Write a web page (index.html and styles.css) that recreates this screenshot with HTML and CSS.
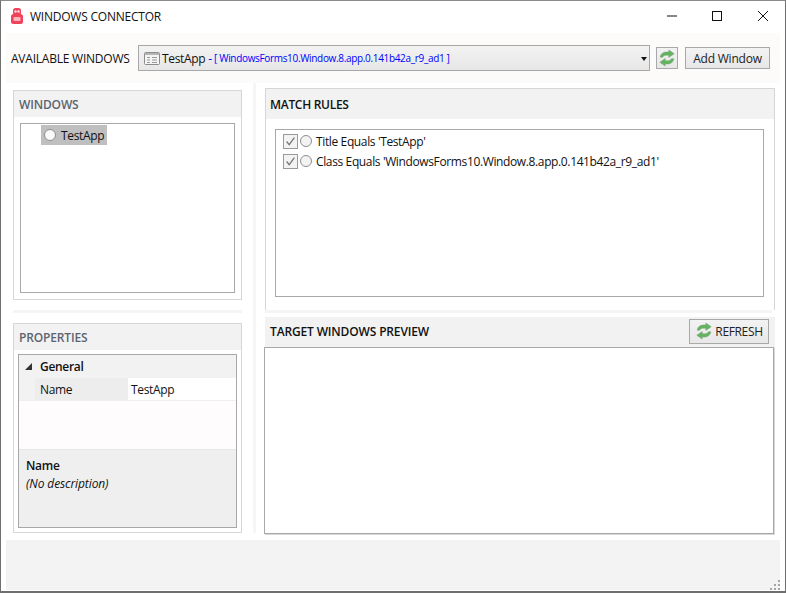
FILE: index.html
```html
<!DOCTYPE html>
<html lang="en">
<head>
<meta charset="utf-8">
<title>Windows Connector</title>
<link rel="stylesheet" href="styles.css">
</head>
<body>
<svg class="defs" width="0" height="0" aria-hidden="true">
  <symbol id="sync" viewBox="0 0 18 18">
    <path d="M2.2 8.2C2.6 4.6 5.6 3 8.4 3h2.4V1l5.4 3.7-5.4 3.7V6.2H8.6c-2 0-3.2.6-3.9 2z" fill="#62b55f" stroke="#7d9c78" stroke-width=".5"/>
    <path d="M15.8 9.8c-.4 3.6-3.4 5.2-6.2 5.2H7.2v2l-5.4-3.7 5.4-3.7v2.2h2.2c2 0 3.2-.6 3.9-2z" fill="#62b55f" stroke="#7d9c78" stroke-width=".5"/>
  </symbol>
  <symbol id="check" viewBox="0 0 15 15">
    <path d="M3 7.5l3 3.6 6-8" fill="none" stroke="#777" stroke-width="1.5"/>
  </symbol>
</svg>
<div class="window">
  <header class="titlebar">
    <svg class="logo" viewBox="0 0 12 16" width="12" height="16" aria-hidden="true">
      <rect x="2" y="0" width="8" height="7" rx="2.500" fill="#f0435a"/>
      <rect x="0" y="6" width="12" height="10" rx="2.500" fill="#f0435a"/>
      <circle cx="4.500" cy="3.500" r="1.200" fill="#ffe0e4"/>
      <circle cx="7.500" cy="3.500" r="1.200" fill="#ffe0e4"/>
      <rect x="2.500" y="9" width="7" height="4" rx="1" fill="#ffb6c0"/>
    </svg>
    <span class="title">WINDOWS CONNECTOR</span>
    <div class="caption">
      <svg viewBox="0 0 12 12" width="12" height="12" class="cap-min" aria-hidden="true"><path d="M1 6h10" stroke="#111" fill="none"/></svg>
      <svg viewBox="0 0 12 12" width="12" height="12" class="cap-max" aria-hidden="true"><rect x="1.500" y="1.500" width="9" height="9" stroke="#111" fill="none"/></svg>
      <svg viewBox="0 0 12 12" width="12" height="12" class="cap-close" aria-hidden="true"><path d="M1 1l10 10M11 1L1 11" stroke="#111" fill="none"/></svg>
    </div>
  </header>

  <section class="toolbar">
    <span class="tool-label">AVAILABLE WINDOWS</span>
    <div class="combo">
      <svg class="win-icon" viewBox="0 0 16 13" width="16" height="13" aria-hidden="true">
        <rect x=".5" y=".5" width="15" height="12" rx="1" fill="#f4f4f4" stroke="#8c8c8c"/>
        <rect x="1" y="1" width="14" height="2" fill="#b5b5b5"/>
        <path d="M3 5.500h3M3 8h3M3 10.500h3M8 5.500h5M8 8h5M8 10.500h5" stroke="#9a9a9a"/>
      </svg>
      <span class="combo-name">TestApp</span>
      <span class="combo-dash">-</span>
      <span class="combo-class">[ WindowsForms10.Window.8.app.0.141b42a_r9_ad1 ]</span>
      <span class="combo-arrow"></span>
    </div>
    <button class="btn btn-icon" type="button" aria-label="Refresh"><svg width="18" height="18" aria-hidden="true"><use href="#sync"/></svg></button>
    <button class="btn btn-add" type="button">Add Window</button>
  </section>

  <main class="main">
    <div class="left">
      <section class="panel">
        <h2 class="panel-head">WINDOWS</h2>
        <div class="tree">
          <div class="tree-item"><span class="radio"></span><span>TestApp</span></div>
        </div>
      </section>
      <div class="rule"></div>
      <section class="panel">
        <h2 class="panel-head">PROPERTIES</h2>
        <div class="props">
          <div class="props-group"><span class="tri"></span><span>General</span></div>
          <div class="props-row">
            <span class="props-name">Name</span>
            <span class="props-value">TestApp</span>
          </div>
          <div class="props-empty"></div>
          <div class="props-desc">
            <strong>Name</strong>
            <em>(No description)</em>
          </div>
        </div>
      </section>
    </div>

    <div class="splitter"></div>

    <div class="right">
      <section class="rules">
        <h2 class="rules-head">MATCH RULES</h2>
        <div class="rules-list">
          <div class="rule-item"><span class="checkbox"><svg width="15" height="15" aria-hidden="true"><use href="#check"/></svg></span><span class="radio"></span><span>Title Equals 'TestApp'</span></div>
          <div class="rule-item"><span class="checkbox"><svg width="15" height="15" aria-hidden="true"><use href="#check"/></svg></span><span class="radio"></span><span>Class Equals 'WindowsForms10.Window.8.app.0.141b42a_r9_ad1'</span></div>
        </div>
      </section>
      <div class="rule rule-right"></div>
      <div class="preview-head">
        <h2 class="rules-head-text">TARGET WINDOWS PREVIEW</h2>
        <button class="btn btn-refresh" type="button"><svg width="18" height="18" aria-hidden="true"><use href="#sync"/></svg><span>REFRESH</span></button>
      </div>
      <div class="preview"></div>
    </div>
  </main>

  <footer class="status">
    <svg class="grip" viewBox="0 0 11 11" width="11" height="11" aria-hidden="true">
      <path d="M8 0h2v2H8zM4 4h2v2H4zM8 4h2v2H8zM0 8h2v2H0zM4 8h2v2H4zM8 8h2v2H8z" fill="#a6a6a6"/>
    </svg>
  </footer>
</div>
</body>
</html>
```

FILE: styles.css
```css
* { box-sizing: border-box; }
html, body { margin: 0; padding: 0; background: #fff; }
body { font-family: "Open Sans", "Noto Sans", sans-serif; font-size: 12px; color: #111; }
.defs { display: block; height: 0; }
h2 { margin: 0; font-size: 12px; font-weight: 600; }
.window { width: 786px; height: 593px; border: 1px solid #6f6f6f; border-bottom-width: 2px; border-top-color: #8a8a8a; display: flex; flex-direction: column; background: #fff; overflow: hidden; }

.titlebar { height: 32px; flex: none; display: flex; align-items: center; padding: 0 0 2px 10px; }
.logo { flex: none; }
.title { margin-left: 7px; letter-spacing: -.23px; }
.caption { margin-left: auto; display: flex; align-items: center; padding-right: 16px; }
.cap-max { margin-left: 33px; }
.cap-close { margin-left: 34px; }

.toolbar { height: 50px; flex: none; margin: 0 5px; padding-left: 5px; background: #fdfafa; display: flex; align-items: center; }
.tool-label { width: 127px; flex: none; letter-spacing: -.23px; white-space: nowrap; }
.combo { width: 512px; height: 26px; flex: none; border: 1px solid #a8a8a8; background: linear-gradient(#f3f3f3, #e7e7e7); display: flex; align-items: center; padding-left: 5px; position: relative; }
.combo-name { margin-left: 2px; letter-spacing: -.35px; }
.combo-dash { margin-left: 3px; color: #0000ff; }
.combo-class { margin-left: 2px; color: #0000ff; font-size: 10px; letter-spacing: -.33px; white-space: nowrap; }
.combo-arrow { position: absolute; right: 2px; top: 11px; border-style: solid; border-width: 4px 3.5px 0; border-color: #111 transparent transparent; }
.btn { font: inherit; color: #222; padding: 0; border: 1px solid #a8a8a8; background: linear-gradient(#f3f3f3, #e7e7e7); display: flex; align-items: center; justify-content: center; height: 22px; flex: none; }
.btn-icon { width: 22px; margin-left: 6px; }
.btn-add { width: 85px; margin-left: 7px; letter-spacing: -.2px; }

.main { height: 457px; flex: none; display: flex; }
.left { width: 229px; flex: none; margin-left: 12px; padding-top: 7px; }
.panel { height: 210px; width: 229px; border: 1px solid #d6d6d6; display: flex; flex-direction: column; background: #fff; }
.panel-head { height: 26px; flex: none; background: #f2f2f2; color: #5d6470; padding-left: 5px; line-height: 28px; letter-spacing: -.15px; }
.rule { height: 3px; background: #f5f5f5; margin: 10px 0; width: 229px; }
.tree { margin: 6px 6px 6px; flex: 1; border: 1px solid #a8a8a8; padding: 1px 0 0 20px; }
.tree-item { width: 66px; height: 20px; background: #bfbfbf; display: flex; align-items: center; padding-left: 3px; gap: 5px; letter-spacing: -.35px; }
.radio { width: 12px; height: 12px; border-radius: 50%; border: 1px solid #8e8e8e; background: #fafafa; flex: none; }

.props { margin: 4px 4px 4px; flex: 1; border: 1px solid #a8a8a8; display: flex; flex-direction: column; background: #fffcfd; }
.props-group { height: 23px; flex: none; background: #f2f2f2; display: flex; align-items: center; font-weight: 600; padding-left: 6px; letter-spacing: -.3px; }
.tri { width: 0; height: 0; border-style: solid; border-width: 0 0 7px 7px; border-color: transparent transparent #333; margin-right: 8px; }
.props-row { height: 23px; flex: none; display: flex; background: #fff; border-bottom: 1px solid #f0f0f0; letter-spacing: -.35px; }
.props-name { width: 109px; flex: none; background: #ededed; border-left: 16px solid #f2f2f2; padding-left: 5px; line-height: 23px; height: 22px; }
.props-value { padding-left: 3px; line-height: 23px; height: 22px; }
.props-empty { flex: 1; }
.props-desc { height: 78px; flex: none; background: #efefef; border-top: 1px solid #e6e6e6; padding: 7px 7px; display: flex; flex-direction: column; gap: 1px; letter-spacing: -.1px; }
.props-desc strong { font-weight: 600; letter-spacing: -.3px; }

.splitter { width: 3px; flex: none; margin: 0 0 7px 11px; background: #f6f6f6; }
.right { width: 511px; flex: none; margin-left: 8px; padding-top: 5px; display: flex; flex-direction: column; }
.rules { height: 222px; margin-left: 1px; border: 1px solid #d6d6d6; border-bottom: 0; flex: none; display: flex; flex-direction: column; width: 510px; }
.rules-head { height: 30px; flex: none; background: #f2f2f2; padding-left: 4px; line-height: 31px; letter-spacing: -.3px; }
.rules-list { margin: 10px 10px 13px 9px; flex: 1; border: 1px solid #a8a8a8; padding: 1px 0 0 7px; width: 489px; }
.rule-item { height: 20px; display: flex; align-items: center; letter-spacing: -.37px; white-space: nowrap; }
.checkbox { width: 15px; height: 15px; border: 1px solid #9a9a9a; background: #f3f3f3; flex: none; display: flex; align-items: center; justify-content: center; margin-right: 2px; }
.rule-item .radio { margin-right: 4px; background: #f3f3f3; }
.rule-right { margin: 0 0 4px 1px; width: 507px; }
.preview-head { height: 30px; flex: none; margin-left: 1px; background: #f2f2f2; display: flex; align-items: center; padding: 0 6px 2px 5px; justify-content: space-between; }
.rules-head-text { letter-spacing: -.15px; }
.btn-refresh { width: 80px; height: 25px; gap: 2px; letter-spacing: -.35px; }
.preview { height: 187px; flex: none; border: 1px solid #a8a8a8; box-shadow: 1px 1px 0 #d8d8d8; width: 510px; }

.status { flex: 1; margin: 0 5px 1px; background: #f3f3f3; position: relative; }
.grip { position: absolute; right: -1px; bottom: -1px; }
```
